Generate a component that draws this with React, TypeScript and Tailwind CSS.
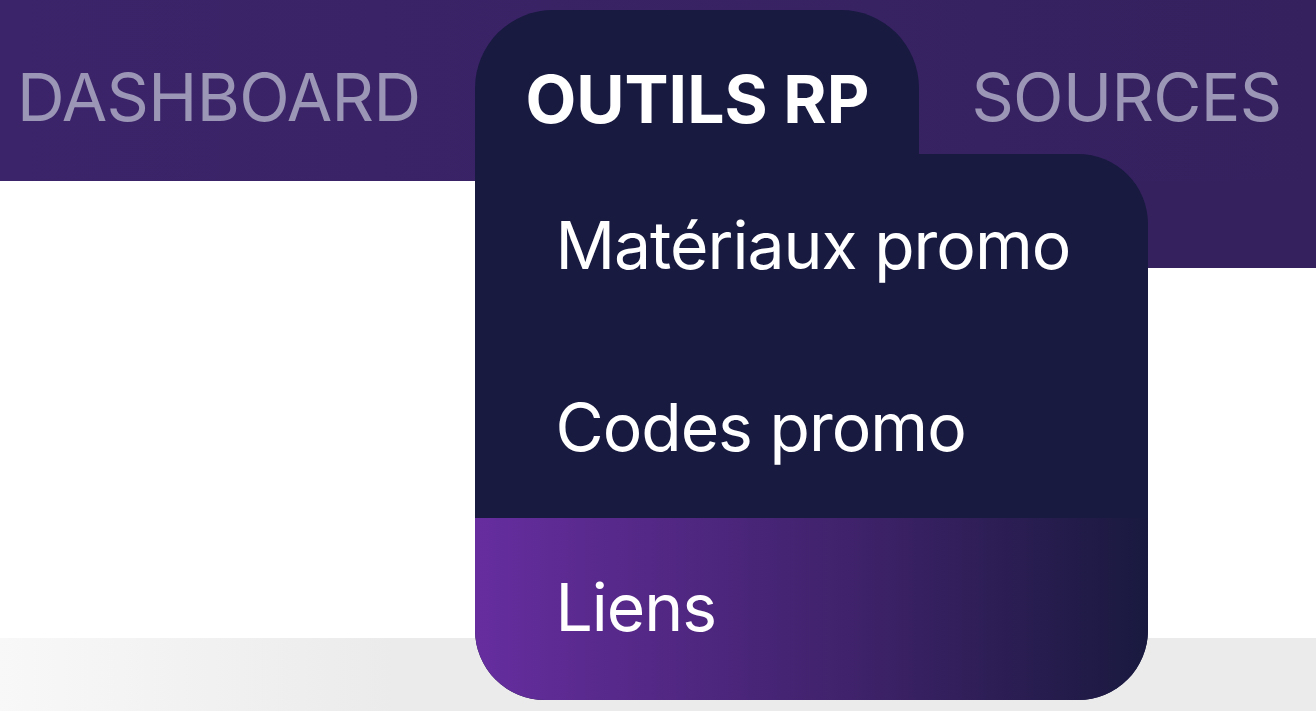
const menuItems = [
  { label: "Matériaux promo", active: false },
  { label: "Codes promo", active: false },
  { label: "Liens", active: true },
];

const font = { fontFamily: "Inter, 'Noto Sans', sans-serif" };

const App = () => {
  return (
    <div
      className="w-[1316px] h-[711px] overflow-hidden bg-white flex flex-col"
      style={font}
    >
      <header className="relative z-10 h-[181px] shrink-0 bg-linear-to-r from-[#3c246a] to-[#35215e] flex items-start">
        <a className="ml-[17px] pt-[64px] text-[66px] leading-none tracking-[-0.01em] text-[#9b95b6] uppercase">
          Dashboard
        </a>
        <div className="relative ml-[55px] mt-[10px]">
          <div className="h-[144px] rounded-t-[78px] bg-[#181a40] px-[50px] pt-[56px]">
            <span className="block text-[66px] leading-none font-bold text-white uppercase">
              Outils RP
            </span>
          </div>
          <div className="absolute left-0 top-full w-[673px] h-[546px] flex flex-col rounded-tr-[70px] rounded-b-[70px] bg-[#181a40] overflow-hidden">
            {menuItems.map((item) => (
              <a
                key={item.label}
                className={
                  item.active
                    ? "h-[182px] flex items-center pl-[80px] pb-[4px] text-[66px] leading-none tracking-[-0.015em] text-white bg-linear-to-r from-[#662d9f] via-[#3c2167] via-60% to-[#19193f]"
                    : "h-[182px] flex items-center pl-[80px] text-[66px] leading-none tracking-[-0.015em] text-white"
                }
              >
                {item.label}
              </a>
            ))}
          </div>
        </div>
        <a className="ml-[52px] pt-[64px] text-[66px] leading-none tracking-[-0.01em] text-[#9b95b6] uppercase">
          Sources
        </a>
      </header>
      <div className="flex justify-end">
        <div className="w-[220px] h-[87px] bg-[#35215e]"></div>
      </div>
      <div className="flex-1"></div>
      <div className="h-[73px] bg-linear-to-r from-[#f8f8f8] to-[#ebebeb] to-30%"></div>
    </div>
  );
};

export default App;
